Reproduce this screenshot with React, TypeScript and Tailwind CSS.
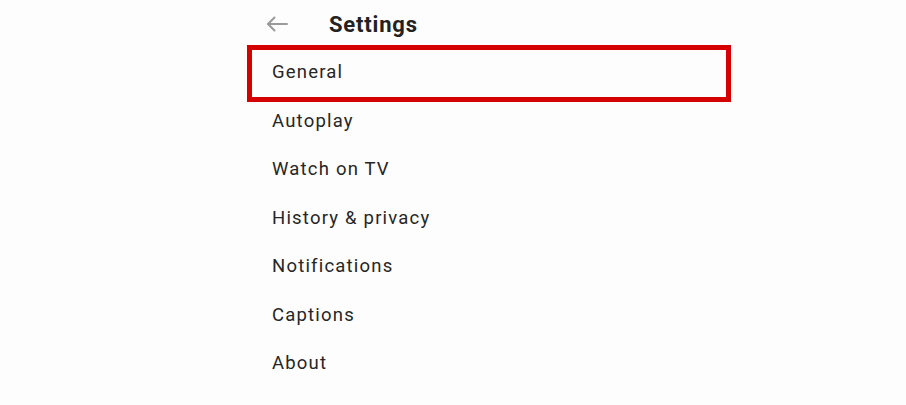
import React from 'react';

const items = ['General', 'Autoplay', 'Watch on TV', 'History & privacy', 'Notifications', 'Captions', 'About'];

export default function App() {
  return (
    <div className="w-[906px] h-[405px] bg-[#fdfdfd] overflow-hidden" style={{ fontFamily: 'Roboto, "Noto Sans", sans-serif' }}>
      <div className="ml-[251px] w-[476px]">
        {/* Header */}
        <div className="h-[49px] flex items-center">
          <svg className="ml-[15px] -mt-[1px] w-[22px] h-[16px]" viewBox="0 0 22 16" fill="none" stroke="#9a9a9a" strokeWidth="2" strokeLinecap="round" strokeLinejoin="round">
            <path d="M21 8H2" />
            <path d="M8.5 1.5L2 8l6.5 6.5" />
          </svg>
          <span className="ml-[41px] -mt-[1px] text-[22px] font-bold text-[#222] tracking-[0.8px]">Settings</span>
        </div>

        {/* Menu */}
        <ul>
          {items.map((item, i) => (
            <li
              key={item}
              className={
                i === 0
                  ? 'h-[48.5px] flex items-center pl-[21px] text-[18.5px] text-[#262626] tracking-[1.2px] outline-[5px] outline-solid outline-[#d50000] -outline-offset-1'
                  : 'h-[48.5px] flex items-center pl-[21px] text-[18.5px] text-[#262626] tracking-[1.2px]'
              }
            >
              {item}
            </li>
          ))}
        </ul>
      </div>
    </div>
  );
}
